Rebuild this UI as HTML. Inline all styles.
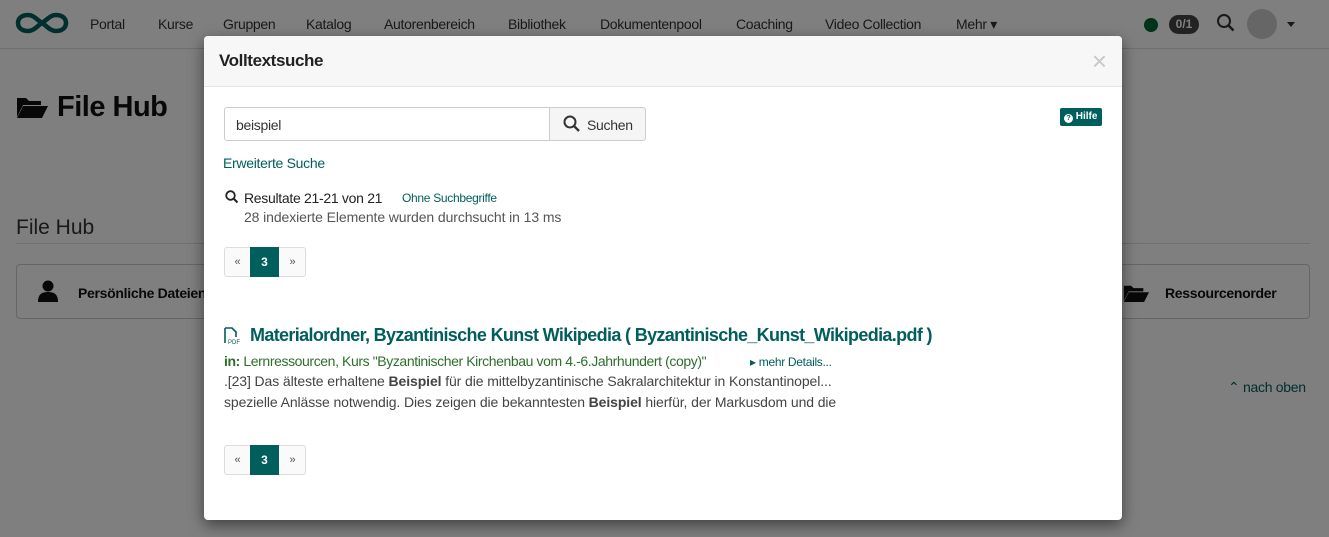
<!DOCTYPE html>
<html><head><meta charset="utf-8"><style>
*{box-sizing:border-box;margin:0;padding:0}
body{width:1329px;height:537px;overflow:hidden;font-family:"Liberation Sans",sans-serif;background:#fff;position:relative;color:#333}
.nav{position:absolute;left:0;top:0;width:1329px;height:49px;background:#fff;border-bottom:1px solid #ddd}
.nav span.i{position:absolute;top:16px;font-size:14px;color:#333;letter-spacing:-0.3px}
.page{position:absolute;left:0;top:50px;width:1329px;height:487px}
.ov{position:absolute;left:0;top:0;width:1329px;height:537px;background:rgba(0,0,0,0.5)}
.dlg{position:absolute;left:204px;top:36px;width:918px;height:484px;background:#fff;border-radius:4px;box-shadow:0 5px 15px rgba(0,0,0,.5);overflow:hidden}
.hd{height:51px;background:#f7f7f7;border-bottom:1px solid #e5e5e5;position:relative}
.hd h4{position:absolute;left:15px;top:15px;font-size:17px;font-weight:bold;color:#222;letter-spacing:-0.4px}
.x{position:absolute;right:15px;top:10px;font-size:26px;color:#c8c8c8}
.t{color:#005e5d}
.pg{position:absolute;left:20px;width:82px;height:30px;border:1px solid #ddd;border-radius:3px;background:#fafafa;font-size:11px}
.pg .a{position:absolute;left:0;width:25px;top:8px;text-align:center;color:#555}
.pg .c{position:absolute;left:25px;top:-1px;width:29px;height:30px;background:#005e5d;color:#fff;text-align:center;line-height:30px;font-weight:bold;font-size:12px}
.pg .b{position:absolute;left:54px;width:27px;top:8px;text-align:center;color:#555}
.s{font-size:14px;letter-spacing:-0.3px;position:absolute;white-space:nowrap}
</style></head><body>
<div class="nav">
<svg style="position:absolute;left:14px;top:11px" width="56" height="24" viewBox="0 0 56 24"><path d="M14 4C7 4 4 8 4 12s3 8 10 8c6 0 9-5 14-8s8-8 14-8c7 0 10 4 10 8s-3 8-10 8c-6 0-9-5-14-8S20 4 14 4z" fill="none" stroke="#005e5d" stroke-width="4.5"/></svg>
<span class="i" style="left:90px">Portal</span><span class="i" style="left:158px">Kurse</span><span class="i" style="left:223px">Gruppen</span><span class="i" style="left:306px">Katalog</span><span class="i" style="left:384px">Autorenbereich</span><span class="i" style="left:508px">Bibliothek</span><span class="i" style="left:600px">Dokumentenpool</span><span class="i" style="left:736px">Coaching</span><span class="i" style="left:825px">Video Collection</span><span class="i" style="left:956px">Mehr ▾</span>
<div style="position:absolute;left:1144px;top:18px;width:14px;height:14px;border-radius:50%;background:#006633"></div>
<div style="position:absolute;left:1169px;top:15px;width:30px;height:19px;border-radius:10px;background:#444;color:#fff;font-size:12px;text-align:center;line-height:19px;font-weight:bold">0/1</div>
<svg style="position:absolute;left:1216px;top:13px" width="20" height="20"><circle cx="8" cy="8" r="6" fill="none" stroke="#333" stroke-width="2"/><path d="M12.5 12.5l5 5" stroke="#333" stroke-width="2.5"/></svg>
<div style="position:absolute;left:1247px;top:9px;width:30px;height:30px;border-radius:50%;background:#ccc"></div>
<div style="position:absolute;left:1287px;top:22px;border:4px solid transparent;border-top:5px solid #333"></div>
</div>
<div class="page">
<svg style="position:absolute;left:16px;top:45px" width="32" height="24" viewBox="0 0 32 24"><path d="M1 3h9l3 3h12v4H7L1 22z M7 11h25l-6 12H1z" fill="#111"/></svg>
<div style="position:absolute;left:57px;top:41px;font-size:29px;font-weight:bold;color:#111;letter-spacing:-0.5px">File Hub</div>
<div style="position:absolute;left:16px;top:166px;font-size:21px;color:#333">File Hub</div>
<div style="position:absolute;left:16px;top:193px;width:1294px;border-top:1px solid #ddd"></div>
<div style="position:absolute;left:16px;top:214px;width:1294px;height:55px;border:1px solid #ccc;border-radius:4px"></div>
<svg style="position:absolute;left:38px;top:230px" width="20" height="22"><circle cx="10" cy="6" r="5.5" fill="#111"/><path d="M0 22c0-8 4-10 10-10s10 2 10 10z" fill="#111"/></svg>
<div style="position:absolute;left:78px;top:235px;font-size:14px;font-weight:bold;color:#111;letter-spacing:-0.3px">Persönliche Dateien</div>
<svg style="position:absolute;left:1123px;top:233px" width="26" height="20" viewBox="0 0 32 24"><path d="M1 3h9l3 3h12v4H7L1 22z M7 11h25l-6 12H1z" fill="#111"/></svg>
<div style="position:absolute;left:1165px;top:235px;font-size:14px;font-weight:bold;color:#111;letter-spacing:-0.3px">Ressourcenorder</div>
<div style="position:absolute;left:1228px;top:329px;font-size:14px;color:#005e5d;letter-spacing:-0.3px">⌃ nach oben</div>
</div>
<div class="ov"></div>
<div class="dlg">
<div class="hd"><h4>Volltextsuche</h4><div class="x">×</div></div>
<div style="position:absolute;left:20px;top:71px;width:326px;height:34px;border:1px solid #ccc;border-radius:3px 0 0 3px"></div>
<div class="s" style="left:32px;top:81px;color:#333">beispiel</div>
<div style="position:absolute;left:345px;top:71px;width:97px;height:34px;border:1px solid #ccc;border-radius:0 3px 3px 0;background:#f5f5f5"></div>
<svg style="position:absolute;left:359px;top:79px" width="18" height="18"><circle cx="7" cy="7" r="5.5" fill="none" stroke="#333" stroke-width="2"/><path d="M11 11l5 5" stroke="#333" stroke-width="2.3"/></svg>
<div class="s" style="left:383px;top:81px">Suchen</div>
<div style="position:absolute;left:856px;top:72px;width:42px;height:18px;background:#005e5d;border-radius:2px;color:#fff;font-size:10px;font-weight:bold;line-height:18px;padding-left:4px"><span style="display:inline-block;width:9px;height:9px;border-radius:50%;background:#fff;color:#005e5d;font-size:7px;line-height:9px;text-align:center;vertical-align:-1px">?</span> Hilfe</div>
<div class="s t" style="left:19px;top:119px">Erweiterte Suche</div>
<svg style="position:absolute;left:21px;top:154px" width="14" height="14"><circle cx="5.5" cy="5.5" r="4.3" fill="none" stroke="#222" stroke-width="1.8"/><path d="M8.5 8.5l4 4" stroke="#222" stroke-width="2"/></svg>
<div class="s" style="left:40px;top:154px;color:#222">Resultate 21-21 von 21</div>
<div class="s t" style="left:198px;top:155px;font-size:12px">Ohne Suchbegriffe</div>
<div class="s" style="left:40px;top:173px;color:#555;letter-spacing:-0.1px">28 indexierte Elemente wurden durchsucht in 13 ms</div>
<div class="pg" style="top:211px"><span class="a">«</span><span class="c">3</span><span class="b">»</span></div>
<svg style="position:absolute;left:19px;top:291px" width="18" height="18"><path d="M2 1h7l4 4v5M2 1v15" fill="none" stroke="#005e5d" stroke-width="1.6"/><text x="5" y="17" font-size="6" fill="#005e5d" font-family="Liberation Sans">PDF</text></svg>
<div class="s t" style="left:46px;top:289px;font-size:18px;font-weight:bold;letter-spacing:-0.65px">Materialordner, Byzantinische Kunst Wikipedia ( Byzantinische_Kunst_Wikipedia.pdf )</div>
<div class="s" style="left:20px;top:317px;color:#2d6e2d;font-size:14px;letter-spacing:-0.4px"><b>in:</b> Lernressourcen, Kurs "Byzantinischer Kirchenbau vom 4.-6.Jahrhundert (copy)"</div>
<div class="s t" style="left:546px;top:319px;font-size:12px">▸ mehr Details...</div>
<div class="s" style="left:20px;top:337px;color:#444;font-size:14px;letter-spacing:-0.1px">.[23] Das älteste erhaltene <b>Beispiel</b> für die mittelbyzantinische Sakralarchitektur in Konstantinopel...</div>
<div class="s" style="left:20px;top:358px;color:#444;font-size:14px;letter-spacing:-0.1px">spezielle Anlässe notwendig. Dies zeigen die bekanntesten <b>Beispiel</b> hierfür, der Markusdom und die</div>
<div class="pg" style="top:409px"><span class="a">«</span><span class="c">3</span><span class="b">»</span></div>
</div>
</body></html>
